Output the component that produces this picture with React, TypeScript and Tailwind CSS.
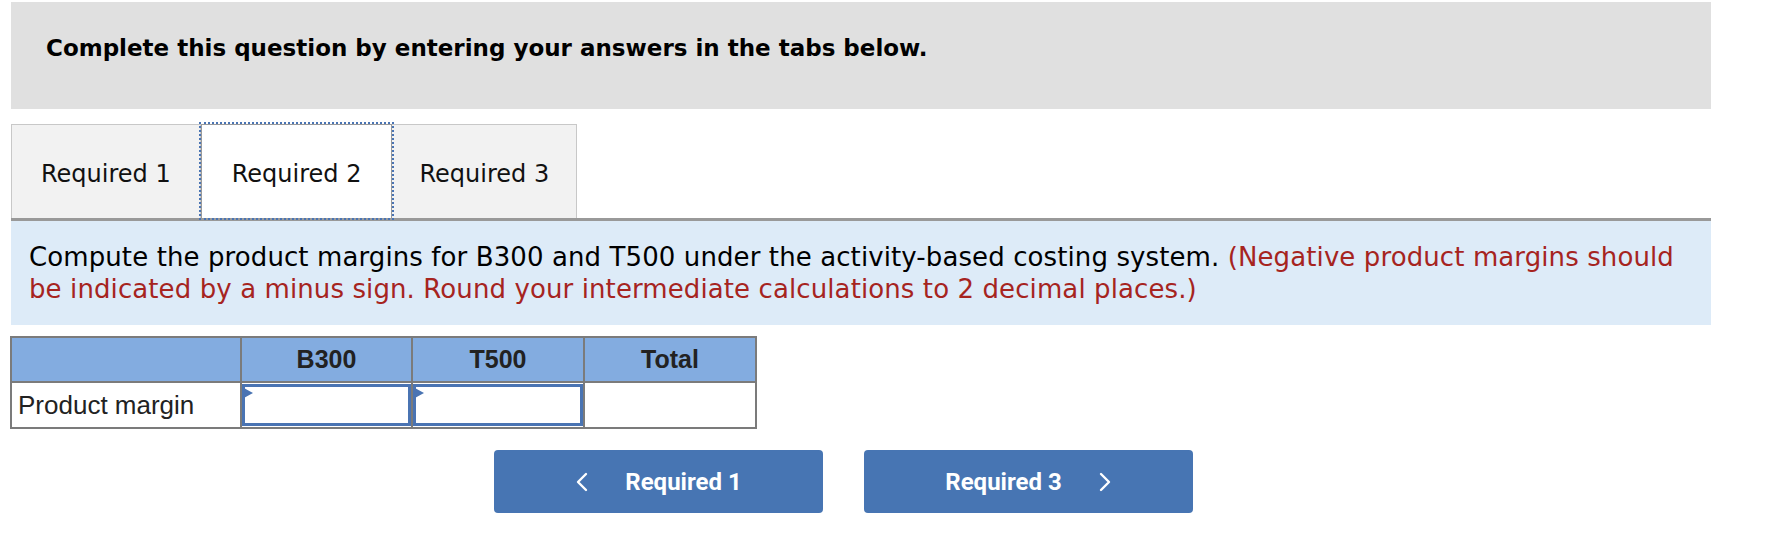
export default function App() {
  return (
    <div className="w-[1792px] h-[542px] bg-white relative overflow-hidden">
      {/* instructions header */}
      <div className="ml-[11px] mt-[2px] w-[1700px] h-[107px] bg-[#e0e0e0] pl-[35px] pt-[31px]">
        <p className="font-['DejaVu_Sans',sans-serif] font-bold text-[23px] leading-[30px] text-black">
          Complete this question by entering your answers in the tabs below.
        </p>
      </div>

      {/* tabs */}
      <div className="ml-[11px] mt-[15px] flex h-[94px] font-['DejaVu_Sans',sans-serif] text-[24px] text-[#111]">
        <div className="flex items-center pt-[5px] px-[29px] bg-[#f2f2f2] border border-b-0 border-[#c8c8c8]">Required 1</div>
        <div className="flex items-center pt-[5px] px-[30px] bg-white border border-b-0 border-[#9a9a9a] outline-2 outline-dotted outline-[#4a74b3] relative z-10">
          Required 2
        </div>
        <div className="flex items-center pt-[5px] px-[27px] bg-[#f2f2f2] border border-l-0 border-b-0 border-[#c8c8c8]">Required 3</div>
      </div>

      {/* question */}
      <div className="ml-[11px] w-[1700px] h-[107px] bg-[#ddebf8] border-t-[3px] border-[#999] pl-[18px] pr-[20px] pt-[20px] font-['DejaVu_Sans',sans-serif] text-[26px] leading-[32px] tracking-[0.1px] text-black">
        Compute the product margins for B300 and T500 under the activity-based costing system.{' '}
        <span className="text-[#a6241f]">
          (Negative product margins should be indicated by a minus sign. Round your intermediate calculations to 2 decimal places.)
        </span>
      </div>

      {/* answer table */}
      <table className="ml-[10px] mt-[11px] border-collapse font-['Liberation_Sans',Arial,sans-serif] text-[#222]">
        <thead>
          <tr className="h-[45px] bg-[#83ace0]">
            <th className="w-[230px] border-2 border-[#7b7b7b]"></th>
            <th className="w-[171px] border-2 border-[#7b7b7b] text-[25px] font-bold">B300</th>
            <th className="w-[172px] border-2 border-[#7b7b7b] text-[25px] font-bold">T500</th>
            <th className="w-[172px] border-2 border-[#7b7b7b] text-[25px] font-bold">Total</th>
          </tr>
        </thead>
        <tbody>
          <tr className="h-[46px]">
            <td className="border-2 border-[#7b7b7b] pl-[6px] text-[26px] text-left">Product margin</td>
            <td className="border-2 border-[#7b7b7b] p-0">
              <InputCell />
            </td>
            <td className="border-2 border-[#7b7b7b] p-0">
              <InputCell />
            </td>
            <td className="border-2 border-[#7b7b7b] bg-white"></td>
          </tr>
        </tbody>
      </table>

      {/* navigation */}
      <div className="ml-[494px] mt-[21px] flex gap-[41px] font-['Roboto',sans-serif] font-bold text-[24px] text-white">
        <button className="w-[329px] h-[63px] rounded-[4px] bg-[#4775b3] flex items-center justify-center gap-[36px]">
          <svg width="14" height="20" viewBox="0 0 14 20" fill="none" stroke="white" strokeWidth="2.4" strokeLinecap="round" strokeLinejoin="round">
            <polyline points="11,2 3,10 11,18" />
          </svg>
          <span>Required 1</span>
        </button>
        <button className="w-[329px] h-[63px] rounded-[4px] bg-[#4775b3] flex items-center justify-center gap-[36px]">
          <span>Required 3</span>
          <svg width="14" height="20" viewBox="0 0 14 20" fill="none" stroke="white" strokeWidth="2.4" strokeLinecap="round" strokeLinejoin="round">
            <polyline points="3,2 11,10 3,18" />
          </svg>
        </button>
      </div>
    </div>
  );
}

function InputCell() {
  return (
    <div className="relative h-[42px] border-[3px] border-[#4a74b3] bg-white">
      <div className="absolute left-[-3px] top-0 w-0 h-0 border-y-[6px] border-y-transparent border-l-[11px] border-l-[#4a74b3]" />
    </div>
  );
}
